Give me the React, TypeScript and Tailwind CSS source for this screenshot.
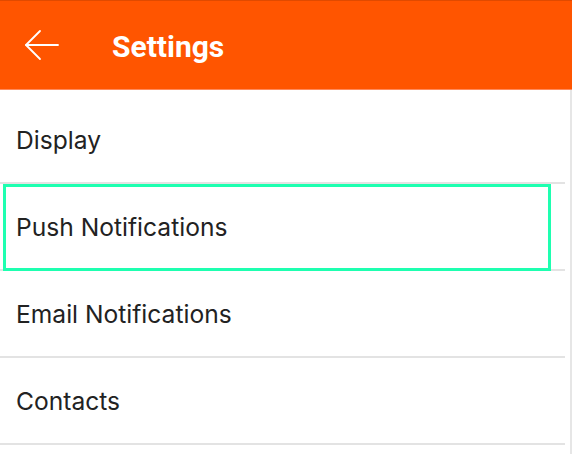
const items = ["Display", "Push Notifications", "Email Notifications", "Contacts"];

export default function App() {
  return (
    <div className="w-[572px] h-[454px] overflow-hidden bg-white font-['Inter',sans-serif]">
      <header className="h-[90px] bg-[#ff5500] border-t border-[#e04a00] border-b border-b-[#ff8a5c] flex items-center">
        <button className="w-[112px] h-full flex items-center pl-[24px]">
          <svg width="36" height="32" viewBox="0 0 36 32" fill="none" stroke="white" strokeWidth="1.8" strokeLinecap="round" strokeLinejoin="round">
            <path d="M34 16H2" />
            <path d="M16 2L2 16l14 14" />
          </svg>
        </button>
        <h1 className="text-white text-[30px] font-bold font-['Roboto',sans-serif] pt-[2px]">Settings</h1>
      </header>
      <div className="border-r-2 border-[#e6e6e6] h-full">
        {items.map((label, i) => {
          const focused = i === 1;
          return (
            <div
              key={label}
              className={`mr-[5px] border-b-2 border-[#e3e3e3] ${i === 0 ? "h-[94px] pt-[8px]" : focused ? "h-[87px]" : "h-[87px] pt-[2px]"}`}
            >
              {focused ? (
                <div className="h-[calc(100%+2px)] ml-[3px] mr-[14px] border-[3px] border-[#1effb0] pl-[10px] flex items-center text-[24.6px] text-[#222]">
                  {label}
                </div>
              ) : (
                <div className="h-full flex items-center pl-[16px] text-[24.6px] text-[#222]">{label}</div>
              )}
            </div>
          );
        })}
      </div>
    </div>
  );
}
